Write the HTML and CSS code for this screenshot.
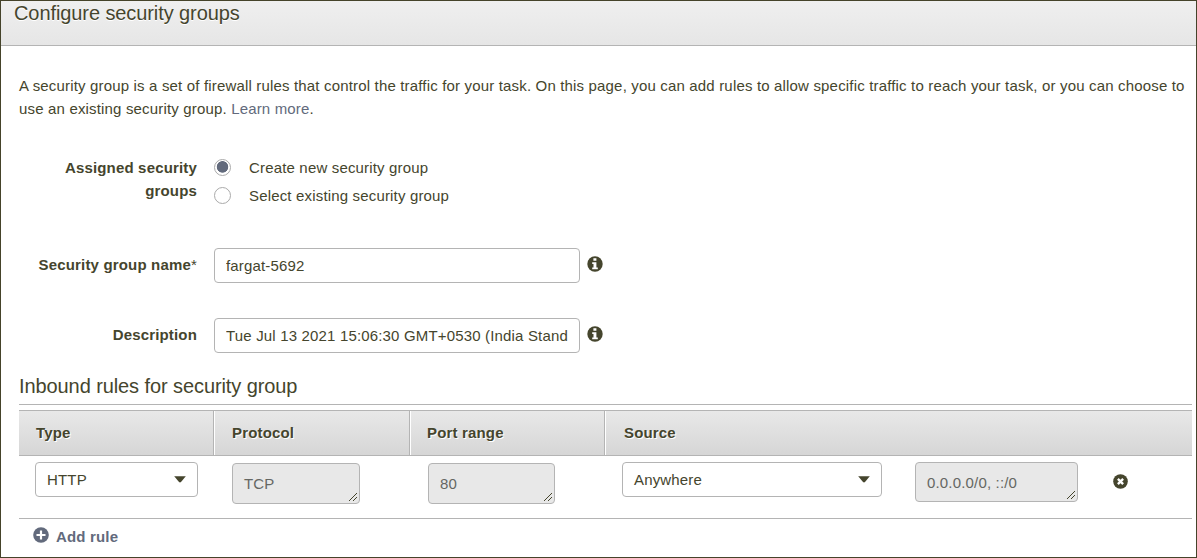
FILE: index.html
```html
<!DOCTYPE html>
<html lang="en">
<head>
<meta charset="utf-8">
<title>Configure security groups</title>
<link rel="stylesheet" href="styles.css">
</head>
<body>
<svg class="defs" width="0" height="0" aria-hidden="true">
  <symbol id="info" viewBox="0 0 16 16"><circle cx="8" cy="8" r="7.7" fill="currentColor"/><path fill="#fff" d="M6.4 2.2h3v2.6h-3zM5.2 6.2h4.2v5.2h1.4v1.8H5.2v-1.8h1.3V8H5.2z"/></symbol>
  <symbol id="grip" viewBox="0 0 10 10"><path d="M1 9 9 1M5 9 9 5" fill="none" stroke="currentColor" stroke-width="1"/></symbol>
  <symbol id="caret" viewBox="0 0 12 7"><path d="M.2.3h11.6L7 6.1Q6 7 5 6.1z" fill="currentColor"/></symbol>
</svg>
<div class="panel">
  <header class="panel-head"><h1 class="title">Configure security groups</h1></header>
  <main class="content">
    <p class="intro"><span class="line line-first">A security group is a set of firewall rules that control the traffic for your task. On this page, you can add rules to allow specific traffic to reach your task, or you can choose to</span> <span class="line">use an existing security group. <a class="link">Learn more</a>.</span></p>
    <div class="row assigned">
      <div class="label">Assigned security<br>groups</div>
      <div class="radios">
        <div class="option"><span class="radio checked"></span><span>Create new security group</span></div>
        <div class="option"><span class="radio"></span><span>Select existing security group</span></div>
      </div>
    </div>
    <div class="row name">
      <div class="label">Security group name<span class="star">*</span></div>
      <div class="field"><span class="clip">fargat-5692</span></div>
      <svg class="info"><use href="#info"/></svg>
    </div>
    <div class="row description">
      <div class="label">Description</div>
      <div class="field"><span class="clip">Tue Jul 13 2021 15:06:30 GMT+0530 (India Stand</span></div>
      <svg class="info"><use href="#info"/></svg>
    </div>
    <h2 class="subtitle">Inbound rules for security group</h2>
    <div class="table">
      <div class="table-head">
        <div class="th">Type</div><div class="th">Protocol</div><div class="th">Port range</div><div class="th">Source</div>
      </div>
      <div class="table-row">
        <div class="select type"><span>HTTP</span><svg class="caret"><use href="#caret"/></svg></div>
        <div class="area protocol"><span>TCP</span><svg class="grip"><use href="#grip"/></svg></div>
        <div class="area port"><span>80</span><svg class="grip"><use href="#grip"/></svg></div>
        <div class="select source"><span>Anywhere</span><svg class="caret"><use href="#caret"/></svg></div>
        <div class="area cidr"><span>0.0.0.0/0, ::/0</span><svg class="grip"><use href="#grip"/></svg></div>
        <svg class="remove" viewBox="0 0 16 16"><circle cx="8" cy="8" r="7.8" fill="currentColor"/><path d="m5.2 5.2 5.6 5.6M10.8 5.2l-5.6 5.6" stroke="#fff" stroke-width="2.5"/></svg>
      </div>
    </div>
    <div class="add"><svg class="plus" viewBox="0 0 16 16"><circle cx="8" cy="8" r="7.8" fill="currentColor"/><path d="M8 3.5v9M3.5 8h9" stroke="#fff" stroke-width="2.2"/></svg><span>Add rule</span></div>
  </main>
</div>
</body>
</html>
```
FILE: styles.css
```css
* { box-sizing: border-box; }
body { margin: 0; background: #fff; color: #45452d; font: 15px/23px "Liberation Sans", Arial, sans-serif; letter-spacing: .168px; }
.defs { position: absolute; }
svg { display: block; flex: none; }
.panel { width: 1197px; height: 558px; border: 1px solid #45432a; overflow: hidden; }
.panel-head { height: 45px; border-bottom: 1px solid #b4b4b4; background: linear-gradient(#efefef, #e6e6e6); padding-left: 13px; }
.title, .subtitle { margin: 0; font-size: 20px; font-weight: 400; line-height: 24px; letter-spacing: -.09px; white-space: nowrap; }
.title { text-shadow: 0 1px 0 #fff; }
.content { padding: 28px 4px 0 18px; }
.intro { margin: 0; }
.line { display: block; white-space: nowrap; }
.link, .add { color: #626a7c; }
.row { display: flex; align-items: flex-start; }
.label { width: 178px; margin-right: 17px; font-weight: 700; text-align: right; white-space: nowrap; }
.star { font-weight: 400; }
.assigned { margin-top: 36px; height: 92px; }
.option { display: flex; height: 28px; gap: 18px; }
.radio { width: 17px; height: 17px; margin-top: 3px; border: 1px solid #aaa; border-radius: 50%; background: #fff; }
.checked { background: radial-gradient(circle at 50% 46%, #626a7c 5.4px, #fff 6.1px); }
.field { width: 366px; height: 35px; border: 1px solid #b4b4b4; border-radius: 4px; padding: 5px 11px; background: #fff; }
.clip { display: block; overflow: hidden; white-space: nowrap; }
.info { width: 16px; height: 16px; margin: 8px 0 0 7px; }
.name, .description { height: 70px; }
.name .label, .description .label { padding-top: 5px; }
.description { height: 56px; }
.subtitle { height: 31px; border-bottom: 1px solid #b4b4b4; }
.table { margin-top: 5px; border-bottom: 1px solid #b4b4b4; }
.table-head { display: grid; grid-template-columns: 195px 196px 195px 1fr; height: 46px; border: solid #b4b4b4; border-width: 1px 0; background: linear-gradient(#e8e8e8, #d6d6d6); }
.th { padding: 10px 0 0 17px; font-weight: 700; text-shadow: 1px 1px 0 #fff; border-right: 1px solid #b4b4b4; box-shadow: inset 1px 0 #fff; }
.th:first-child { box-shadow: none; }
.th:nth-child(2), .th:last-child { padding-left: 18px; }
.th:last-child { border: 0; padding-left: 19px; }
.table-row { display: flex; align-items: flex-start; height: 62px; padding: 6px 0 0 16px; }
.select { display: flex; justify-content: space-between; height: 35px; padding: 5px 11px; border: 1px solid #b4b4b4; border-radius: 4px; background: #fff; }
.caret { width: 12px; height: 7px; margin-top: 8px; }
.area { position: relative; height: 41px; padding: 8px 11px; border: 1px solid #b4b4b4; border-radius: 4px; background: #e8e8e8; color: #656763; }
.grip { position: absolute; right: 1px; bottom: 1px; width: 10px; height: 10px; color: #45452d; }
.type { width: 163px; }
.protocol { width: 128px; margin: 1px 0 0 34px; }
.port { width: 127px; margin: 1px 0 0 68px; }
.source { width: 260px; margin-left: 67px; }
.cidr { width: 163px; height: 40px; margin-left: 33px; }
.remove { width: 15px; height: 15px; margin: 12px 0 0 35px; }
.add { display: flex; gap: 7px; padding: 6px 0 0 14px; font-weight: 700; }
.plus { width: 16px; height: 16px; margin-top: 2px; }
```
